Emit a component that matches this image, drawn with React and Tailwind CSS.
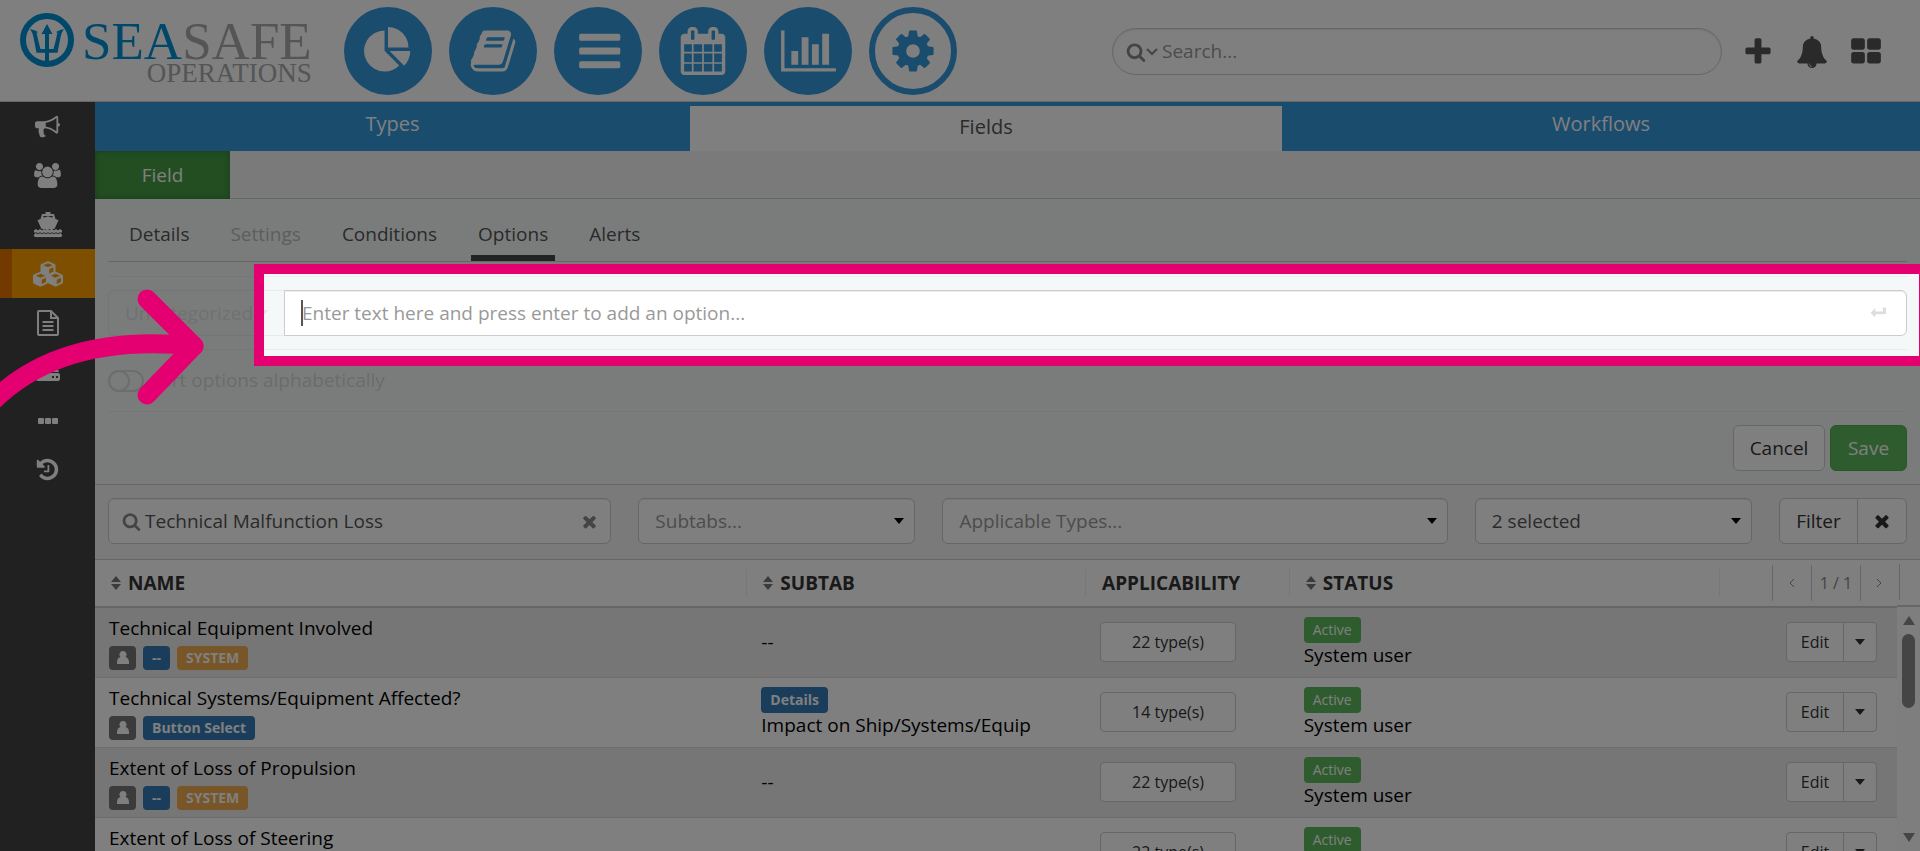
const paths = {
  bullhorn: 'M1664 640q53 0 90.5 37.5t37.5 90.5-37.5 90.5-90.5 37.5v384q0 52-38 90t-90 38q-417-347-812-380-58 19-91 66t-31 100.5 40 92.5q-20 33-23 65.5t6 58 33.5 55 48 50 61.5 50.5q-29 58-111.5 83t-168.5 11.5-132-55.5q-7-23-29.5-87.5t-32-94.5-23-89-15-101 3.5-98.5 22-110.5h-122q-66 0-113-47t-47-113v-192q0-66 47-113t113-47h480q435 0 896-384 52 0 90 38t38 90v384zm-128 604v-954q-394 302-768 343v270q377 42 768 341z',
  users: 'M593 896q-162 5-265 128h-134q-82 0-138-40.5t-56-118.5q0-353 124-353 6 0 43.5 21t97.5 42.5 119 21.5q67 0 133-23-5 37-5 66 0 159 81 290zm1071 637q0 120-73 189.5t-194 69.5h-874q-121 0-194-69.5t-73-189.5q0-53 3.5-103.5t14-109 26.5-108.5 43-97.5 62-81 85.5-53.5 111.5-20q10 0 43 21.5t73 48 107 48 135 21.5 135-21.5 107-48 73-48 43-21.5q61 0 111.5 20t85.5 53.5 62 81 43 97.5 26.5 108.5 14 109 3.5 103.5zm-1024-1277q0 106-75 181t-181 75-181-75-75-181 75-181 181-75 181 75 75 181zm704 384q0 159-112.5 271.5t-271.5 112.5-271.5-112.5-112.5-271.5 112.5-271.5 271.5-112.5 271.5 112.5 112.5 271.5zm576 225q0 78-56 118.5t-138 40.5h-134q-103-123-265-128 81-131 81-290 0-29-5-66 66 23 133 23 59 0 119-21.5t97.5-42.5 43.5-21q124 0 124 353zm-128-609q0 106-75 181t-181 75-181-75-75-181 75-181 181-75 181 75 75 181z',
  search: 'M1216 832q0-185-131.5-316.5t-316.5-131.5-316.5 131.5-131.5 316.5 131.5 316.5 316.5 131.5 316.5-131.5 131.5-316.5zm512 832q0 52-38 90t-90 38q-54 0-90-38l-343-342q-179 124-399 124-143 0-273.5-55.5t-225-150-150-225-55.5-273.5 55.5-273.5 150-225 225-150 273.5-55.5 273.5 55.5 225 150 150 225 55.5 273.5q0 220-124 399l343 343q37 37 37 90z',
  times: 'M1490 1322q0 40-28 68l-136 136q-28 28-68 28t-68-28l-294-294-294 294q-28 28-68 28t-68-28l-136-136q-28-28-28-68t28-68l294-294-294-294q-28-28-28-68t28-68l136-136q28-28 68-28t68 28l294 294 294-294q28-28 68-28t68 28l136 136q28 28 28 68t-28 68l-294 294 294 294q28 28 28 68z',
  plus: 'M1600 736v192q0 40-28 68t-68 28h-416v416q0 40-28 68t-68 28h-192q-40 0-68-28t-28-68v-416h-416q-40 0-68-28t-28-68v-192q0-40 28-68t68-28h416v-416q0-40 28-68t68-28h192q40 0 68 28t28 68v416h416q40 0 68 28t28 68z',
  bell: 'M912 1696q0-16-16-16-59 0-101.5-42.5t-42.5-101.5q0-16-16-16t-16 16q0 73 51.5 124.5t124.5 51.5q16 0 16-16zm816-288q0 52-38 90t-90 38h-448q0 106-75 181t-181 75-181-75-75-181h-448q-52 0-90-38t-38-90q50-42 91-88t85-119.5 74.5-158.5 50-206 19.5-260q0-152 117-282.5t307-158.5q-8-19-8-39 0-40 28-68t68-28 68 28 28 68q0 20-8 39 190 28 307 158.5t117 282.5q0 139 19.5 260t50 206 74.5 158.5 85 119.5 91 88z',
  grid: 'M832 1024v384q0 52-38 90t-90 38h-512q-52 0-90-38t-38-90v-384q0-52 38-90t90-38h512q52 0 90 38t38 90zm0-768v384q0 52-38 90t-90 38h-512q-52 0-90-38t-38-90v-384q0-52 38-90t90-38h512q52 0 90 38t38 90zm896 768v384q0 52-38 90t-90 38h-512q-52 0-90-38t-38-90v-384q0-52 38-90t90-38h512q52 0 90 38t38 90zm0-768v384q0 52-38 90t-90 38h-512q-52 0-90-38t-38-90v-384q0-52 38-90t90-38h512q52 0 90 38t38 90z',
  pie: 'M768 890l546 546q-106 108-247.5 168t-298.5 60q-209 0-385.5-103t-279.5-279.5-103-385.5 103-385.5 279.5-279.5 385.5-103v762zm187 6h773q0 157-60 298.5t-168 247.5zm709-128h-768v-768q209 0 385.5 103t279.5 279.5 103 385.5z',
  book: 'M1703 478q40 57 18 129l-275 906q-19 64-76.5 107.5t-122.5 43.5h-923q-77 0-148.5-53.5t-99.5-131.5q-24-67-2-127 0-4 3-27t4-37q1-8-3-21.5t-3-19.5q2-11 8-21t16.5-23.5 16.5-23.5q23-38 45-91.5t30-91.5q3-10 .5-30t-.5-28q3-11 17-28t17-23q21-36 42-92t25-90q1-9-2.5-32t.5-28q4-13 22-30.5t22-22.5q19-26 42.5-84.5t27.5-96.5q1-8-3-25.5t-2-26.5q2-8 9-18t18-23 17-21q8-12 16.5-30.5t15-35 16-36 19.5-32 26.5-23.5 36-11.5 47.5 5.5l-1 3q38-9 51-9h761q74 0 114 56t18 130l-274 906q-36 119-71.5 153.5t-128.5 34.5h-869q-27 0-38 15-11 16-1 43 24 70 144 70h923q29 0 56-15.5t35-41.5l300-987q7-22 5-57 38 15 59 43zm-1064 2q-4 13 2 22.5t20 9.5h608q13 0 25.5-9.5t16.5-22.5l21-64q4-13-2-22.5t-20-9.5h-608q-13 0-25.5 9.5t-16.5 22.5zm-83 256q-4 13 2 22.5t20 9.5h608q13 0 25.5-9.5t16.5-22.5l21-64q4-13-2-22.5t-20-9.5h-608q-13 0-25.5 9.5t-16.5 22.5z',
  bars: 'M1664 1344v128q0 26-19 45t-45 19h-1408q-26 0-45-19t-19-45v-128q0-26 19-45t45-19h1408q26 0 45 19t19 45zm0-512v128q0 26-19 45t-45 19h-1408q-26 0-45-19t-19-45v-128q0-26 19-45t45-19h1408q26 0 45 19t19 45zm0-512v128q0 26-19 45t-45 19h-1408q-26 0-45-19t-19-45v-128q0-26 19-45t45-19h1408q26 0 45 19t19 45z',
  calendar: 'M192 1664h288v-288h-288v288zm352 0h320v-288h-320v288zm-352-352h288v-320h-288v320zm352 0h320v-320h-320v320zm-352-384h288v-288h-288v288zm736 736h320v-288h-320v288zm-384-736h320v-288h-320v288zm768 736h288v-288h-288v288zm-384-352h320v-320h-320v320zm-352-864v-288q0-13-9.5-22.5t-22.5-9.5h-64q-13 0-22.5 9.5t-9.5 22.5v288q0 13 9.5 22.5t22.5 9.5h64q13 0 22.5-9.5t9.5-22.5zm736 864h288v-320h-288v320zm-384-384h320v-288h-320v288zm384 0h288v-288h-288v288zm32-480v-288q0-13-9.5-22.5t-22.5-9.5h-64q-13 0-22.5 9.5t-9.5 22.5v288q0 13 9.5 22.5t22.5 9.5h64q13 0 22.5-9.5t9.5-22.5zm384-64v1280q0 52-38 90t-90 38h-1408q-52 0-90-38t-38-90v-1280q0-52 38-90t90-38h128v-96q0-66 47-113t113-47h64q66 0 113 47t47 113v96h384v-96q0-66 47-113t113-47h64q66 0 113 47t47 113v96h128q52 0 90 38t38 90z',
  chart: 'M640 896v512h-256v-512h256zm384-512v1024h-256v-1024h256zm1024 1152v128h-2048v-1536h128v1408h1920zm-640-896v768h-256v-768h256zm384-384v1152h-256v-1152h256z',
  cog: 'M1152 896q0-106-75-181t-181-75-181 75-75 181 75 181 181 75 181-75 75-181zm512-109v222q0 12-8 23t-20 13l-185 28q-19 54-39 91 35 50 107 138 10 12 10 25t-9 23q-27 37-99 108t-94 71q-12 0-26-9l-138-108q-44 23-91 38-16 136-29 186-7 28-36 28h-222q-14 0-24.5-8.5t-11.5-21.5l-28-184q-49-16-90-37l-141 107q-10 9-25 9-14 0-25-11-126-114-165-168-7-10-7-23 0-12 8-23 15-21 51-66.5t54-70.5q-27-50-41-99l-183-27q-13-2-21-12.5t-8-23.5v-222q0-12 8-23t19-13l186-28q14-46 39-92-40-57-107-138-10-12-10-24 0-10 9-23 26-36 98.5-107.5t94.5-71.5q13 0 26 10l138 107q44-23 91-38 16-136 29-186 7-28 36-28h222q14 0 24.5 8.5t11.5 21.5l28 184q49 16 90 37l142-107q9-9 24-9 13 0 25 10 129 119 165 170 7 8 7 22 0 12-8 23-15 21-51 66.5t-54 70.5q26 50 41 98l183 28q13 2 21 12.5t8 23.5z',
  history: 'M1664 896q0 156-61 298t-164 245-245 164-298 61q-172 0-327-72.5t-264-204.5q-7-10-6.5-22.5t8.5-20.5l137-138q10-9 25-9 16 2 23 12 73 95 179 147t225 52q104 0 198.5-40.5t163.5-109.5 109.5-163.5 40.5-198.5-40.5-198.5-109.5-163.5-163.5-109.5-198.5-40.5q-98 0-188 35.5t-160 101.5l137 138q31 30 14 69-17 40-59 40h-448q-26 0-45-19t-19-45v-448q0-42 40-59 39-17 69 14l130 129q107-101 244.5-156.5t284.5-55.5q156 0 298 61t245 164 164 245 61 298zm-640-288v448q0 14-9 23t-23 9h-320q-14 0-23-9t-9-23v-64q0-14 9-23t23-9h224v-352q0-14 9-23t23-9h64q14 0 23 9t9 23z',
  enter: 'M1792 320v544q0 66-47 113t-113 47h-1024v288q0 20-14 33t-33 13q-19 0-33-14l-430-430q-14-14-14-34t14-34l430-430q14-14 33-14t33 13 14 33v288h832v-416q0-14 9-23t23-9h288q14 0 23 9t9 23z',
};

function Icon({ name, box = '0 0 1792 1792', className }) {
  return (
    <svg viewBox={box} fill="currentColor" className={className} aria-hidden="true">
      <path d={paths[name]} />
    </svg>
  );
}

function ShipIcon() {
  return (
    <svg viewBox="0 0 28 26" fill="currentColor" className="w-7 h-[26px]" aria-hidden="true">
      <path fillRule="evenodd" d="M11.5 0h5v2h3.500l1.500 5 3 1.200-4 8.800q-1-.5-2 .5-1.200 1-2.300 0t-2.200 0-2.200 0-2.300 0q-1-1-2-.5L3.500 8.200l3-1.200L8 2h3.500zM9.500 4v1.800L14 4.300l4.500 1.500V4z" />
      <path d="M0 20l2-1.500 2 1.500 2-1.500 2 1.500 2-1.500 2 1.500 2-1.500 2 1.500 2-1.500 2 1.500 2-1.500 2 1.500 2-1.500 2 1.500M0 24l2-1.500 2 1.500 2-1.500 2 1.500 2-1.500 2 1.500 2-1.500 2 1.500 2-1.500 2 1.500 2-1.500 2 1.500 2-1.500 2 1.500" fill="none" stroke="currentColor" strokeWidth="2.500" />
    </svg>
  );
}

// One cube: solid body with a hollow top and a hollow right face
const cube = 'M0 4.500Q0 3.300 1 2.900L6.500.4Q7.500 0 8.500.4L14 2.900q1 .4 1 1.600v6q0 1.200-1 1.700l-5.500 2.600q-1 .5-2 0L1 12.200q-1-.5-1-1.700zM7.500 2.200L2.800 4.200l4.700 2 4.700-2zM8.700 8.200v4.200l4.300-2V6.200z';

function CubesIcon() {
  return (
    <svg viewBox="0 0 30 26" fill="currentColor" fillRule="evenodd" className="w-[30px] h-[26px]" aria-hidden="true">
      <path d={cube} transform="translate(7.500 0)" />
      <path d={cube} transform="translate(0 10.500)" />
      <path d={cube} transform="translate(15 10.500)" />
    </svg>
  );
}

function FileIcon() {
  return (
    <svg viewBox="0 0 22 26" fill="none" stroke="currentColor" strokeWidth="2" className="w-[22px] h-[26px]" aria-hidden="true">
      <path d="M1 2q0-1 1-1h12l7 7v16q0 1-1 1H2q-1 0-1-1zM14 1v7h7M5.500 12h11M5.500 16h11M5.500 20h11" />
    </svg>
  );
}

function HddIcon() {
  return (
    <svg viewBox="0 0 24 20" fill="currentColor" className="w-6 h-5" aria-hidden="true">
      <path fillRule="evenodd" d="M5 1h14l4 9H1zM2 11h20q2 0 2 2v4q0 2-2 2H2q-2 0-2-2v-4q0-2 2-2zM16 14v2h2v-2zM20 14v2h2v-2z" />
    </svg>
  );
}

function DotsIcon() {
  return (
    <svg viewBox="0 0 20 6" fill="currentColor" className="w-5 h-[6px]" aria-hidden="true">
      <rect width="6" height="6" rx="1" />
      <rect x="7" width="6" height="6" rx="1" />
      <rect x="14" width="6" height="6" rx="1" />
    </svg>
  );
}

function Trident() {
  return (
    <svg viewBox="0 0 54 54" className="w-[54px] h-[54px] text-[#0090d2]" aria-hidden="true">
      <circle cx="27" cy="27" r="24" fill="none" stroke="currentColor" strokeWidth="6" />
      <path fill="currentColor" d="M27 11l5.500 10h-3.500v15h4.500q2.500-9 4-16.500-1 0-1.500-.5 3-2 8-3-2.500 3-3.500 8.500-1.500 7.500-3 15.200H29V52h-4V39.700h-8.500q-1.500-7.700-3-15.200-1-5.500-3.500-8.500 5 1 8 3-.5.5-1.500.5 1.500 7.500 4 16.500H25V21h-3.500z" />
    </svg>
  );
}

function Caret({ className = '' }) {
  return (
    <svg viewBox="0 0 10 6" fill="currentColor" className={`w-[10px] h-[6px] pointer-events-none ${className}`} aria-hidden="true">
      <path d="M0 0h10L5 6z" />
    </svg>
  );
}

function Chevron({ d }) {
  return (
    <svg viewBox="0 0 6 10" fill="none" stroke="currentColor" className="w-[6px] h-[10px]" aria-hidden="true">
      <path d={d} />
    </svg>
  );
}

function SortIcon() {
  return (
    <svg viewBox="0 0 10 14" fill="currentColor" className="w-[10px] h-[14px] text-[#777]" aria-hidden="true">
      <path d="M5 0l5 6H0zM0 8h10l-5 6z" />
    </svg>
  );
}

const modules = [
  { name: 'pie', label: 'Dashboard' },
  { name: 'book', label: 'Library' },
  { name: 'bars', label: 'Records' },
  { name: 'calendar', label: 'Calendar' },
  { name: 'chart', label: 'Reports' },
];

const sidebar = [
  { label: 'Announcements', icon: <Icon name="bullhorn" className="w-[25px] h-[25px]" /> },
  { label: 'Users', icon: <Icon name="users" box="0 0 1920 1792" className="w-[27px] h-[25px]" /> },
  { label: 'Vessels', icon: <ShipIcon /> },
  { label: 'Modules', icon: <CubesIcon />, active: true },
  { label: 'Documents', icon: <FileIcon /> },
  { label: 'Storage', icon: <HddIcon /> },
  { label: 'More', icon: <DotsIcon /> },
  { label: 'History', icon: <Icon name="history" className="w-[25px] h-[25px]" /> },
];

const fields = [
  { name: 'Technical Equipment Involved', types: 22, system: true },
  { name: 'Technical Systems/Equipment Affected?', types: 14, control: 'Button Select', subtab: 'Impact on Ship/Systems/Equip' },
  { name: 'Extent of Loss of Propulsion', types: 22, system: true },
  { name: 'Extent of Loss of Steering', types: 22, system: true },
];

function Header() {
  return (
    <header className="h-[102px] shrink-0 bg-white border-b border-[#ccc] flex items-start">
      <a href="#" className="flex pt-[13px] pl-5 gap-2 w-[344px] font-['Liberation_Serif',serif]">
        <Trident />
        <span className="flex flex-col items-end pt-[2px]">
          <span className="text-[53px] leading-[52px] text-[#aaa]"><span className="text-[#0090d2]">SEA</span>SAFE</span>
          <span className="text-[27px] leading-[12px] text-[#aaa]">OPERATIONS</span>
        </span>
      </a>
      <nav className="flex gap-[17px] pt-[7px]">
        {modules.map(m => (
          <button key={m.name} aria-label={m.label} className="w-[88px] h-[88px] rounded-full bg-[#3498db] text-white flex items-center justify-center">
            {m.name === 'chart'
              ? <Icon name="chart" box="0 0 2048 1792" className="w-[55px] h-12" />
              : <Icon name={m.name} className="w-12 h-12 overflow-visible" box={m.name === 'bars' ? '-64 0 1792 1792' : '0 0 1792 1792'} />}
          </button>
        ))}
        <button aria-label="Administration" className="w-[88px] h-[88px] rounded-full border-[6px] border-[#3498db] text-[#3498db] flex items-center justify-center">
          <Icon name="cog" className="w-12 h-12" />
        </button>
      </nav>
      <div className="flex items-center ml-auto pr-[38px] pt-7">
        <label className="w-[610px] h-[47px] rounded-full border border-[#ccc] shadow-[inset_0_1px_2px_rgba(0,0,0,0.1)] flex items-center pl-[13px] text-[#888]">
          <Icon name="search" className="w-5 h-5" />
          <svg viewBox="0 0 12 8" className="w-3 h-2 mr-1" fill="none" stroke="currentColor" strokeWidth="2" aria-hidden="true"><path d="M1 1l5 5 5-5" /></svg>
          <input aria-label="Search" placeholder="Search..." className="flex-1 outline-none placeholder:text-[#999]" />
        </label>
        <div className="flex items-center gap-[22px] ml-[20px] text-[#555]">
          <button aria-label="Add"><Icon name="plus" className="w-8 h-8" /></button>
          <button aria-label="Notifications"><Icon name="bell" className="w-8 h-8" /></button>
          <button aria-label="Apps"><Icon name="grid" className="w-8 h-8" /></button>
        </div>
      </div>
    </header>
  );
}

function Sidebar() {
  return (
    <aside className="w-[95px] shrink-0 bg-[#434343] text-white">
      {sidebar.map(item => (
        <button
          key={item.label}
          aria-label={item.label}
          className={item.active
            ? 'w-full h-[49px] flex items-center justify-center bg-[#ff9f00] border-l-[12px] border-[#e67500] pr-3'
            : 'w-full h-[49px] flex items-center justify-center'}
        >
          {item.icon}
        </button>
      ))}
    </aside>
  );
}

function FieldEditor() {
  return (
    <section className="bg-[#f4f8f8] border-b border-[#ccc] h-[286px] shrink-0">
      <nav className="flex gap-[27px] mx-[13px] pl-[14px] pt-3 border-b border-[#ccc] text-[#555]">
        <a href="#" className="h-[50px] pt-[9px] px-[7px]">Details</a>
        <a href="#" className="h-[50px] pt-[9px] px-[7px] text-[#bbb]">Settings</a>
        <a href="#" className="h-[50px] pt-[9px] px-[7px]">Conditions</a>
        <a href="#" className="h-[50px] pt-[9px] px-[7px] border-b-[6px] border-[#444]">Options</a>
        <a href="#" className="h-[50px] pt-[9px] px-[7px]">Alerts</a>
      </nav>
      <div className="mx-[13px] mt-[14px] h-[74px] border-y border-[#ebeded] flex items-center">
        <label className="relative w-44 h-[46px] border border-r-0 border-[#e8ebec] rounded-l-md flex items-center">
          <select aria-label="Category" disabled className="appearance-none w-full h-full pl-4 outline-none text-[#dfe3e4]">
            <option>Uncategorized</option>
          </select>
          <Caret className="absolute right-4 text-[#dfe3e4]" />
        </label>
        <label className="flex-1 h-[46px] bg-white border border-[#ccc] rounded-r-md shadow-[inset_0_1px_1px_rgba(0,0,0,0.075)] flex items-center pl-4 pr-5">
          <span className="w-[2px] -mr-px h-[26px] bg-[#555]" />
          <input aria-label="New option" placeholder="Enter text here and press enter to add an option..." className="flex-1 outline-none placeholder:text-[#999]" />
          <Icon name="enter" className="w-4 h-4 text-[#ddd]" />
        </label>
      </div>
      <label className="mx-[13px] h-[62px] border-b border-[#ebeded] flex items-center gap-[6px] text-[#d5d9da]">
        <input type="checkbox" disabled className="peer sr-only" />
        <span className="w-9 h-[22px] rounded-full border-2 border-[#d8dcdd] flex items-center">
          <span className="w-[22px] h-[22px] -ml-[2px] shrink-0 rounded-full border-2 border-[#d8dcdd]" />
        </span>
        Sort options alphabetically
      </label>
      <div className="flex justify-end gap-[5px] px-[13px] pt-[13px]">
        <button className="h-[46px] w-[92px] rounded-md border border-[#ccc] bg-white text-[#333]">Cancel</button>
        <button className="h-[46px] w-[77px] rounded-md border border-[#4cae4c] bg-[#5cb85c] text-white">Save</button>
      </div>
    </section>
  );
}

function FilterSelect({ label, text, muted }) {
  return (
    <label className="relative h-[46px] min-w-0 flex items-center">
      <select
        aria-label={label}
        className={`appearance-none w-full h-full rounded-md border border-[#ccc] bg-white pl-4 shadow-[inset_0_1px_1px_rgba(0,0,0,0.075)] ${muted ? 'text-[#999]' : 'text-[#555]'}`}
      >
        <option>{text}</option>
      </select>
      <Caret className="absolute right-[11px] text-black" />
    </label>
  );
}

function Filters() {
  return (
    <form className="h-[75px] shrink-0 bg-[#f5f5f5] border-b border-[#ccc] px-[13px] pt-[13px] grid grid-cols-[503fr_277fr_505fr_277fr_auto] gap-[27px]">
      <label className="h-[46px] min-w-0 rounded-md border border-[#ccc] bg-white shadow-[inset_0_1px_1px_rgba(0,0,0,0.075)] flex items-center pl-[13px] pr-[11px] text-[#888]">
        <Icon name="search" className="w-[19px] h-[19px] mr-1" />
        <input aria-label="Name" defaultValue="Technical Malfunction Loss" className="flex-1 min-w-0 outline-none text-[#555]" />
        <Icon name="times" className="w-[19px] h-[19px]" />
      </label>
      <FilterSelect label="Subtabs" text="Subtabs..." muted />
      <FilterSelect label="Applicable types" text="Applicable Types..." muted />
      <FilterSelect label="Status" text="2 selected" />
      <div className="flex h-[46px]">
        <button type="button" className="w-[79px] rounded-l-md border border-[#ccc] bg-white text-[#333]">Filter</button>
        <button type="button" aria-label="Clear filters" className="w-[50px] -ml-px rounded-r-md border border-[#ccc] bg-white text-[#333] flex items-center justify-center">
          <Icon name="times" className="w-5 h-5" />
        </button>
      </div>
    </form>
  );
}

function HeadCell({ children, sort }) {
  return (
    <th scope="col" className="p-0">
      <div className="h-7 flex items-center gap-[7px] pl-4 border-r border-[#eee]">
        {sort && <SortIcon />}
        {children}
      </div>
    </th>
  );
}

function FieldRow({ field }) {
  return (
    <tr className="h-[70px] border-b border-[#ddd] odd:bg-[#ececec] text-black">
      <td className="pl-[14px] py-0">
        <div className="leading-7">{field.name}</div>
        <div className="flex gap-[7px] mt-1 text-sm font-bold text-white">
          <span className="h-6 w-[27px] rounded bg-[#777] flex items-center justify-center">
            <svg viewBox="0 0 12 14" fill="currentColor" className="w-3 h-[14px]" aria-hidden="true"><path d="M6 0a3.500 3.500 0 0 1 2.500 6q3.500.8 3.500 5.500V13H0v-1.500Q0 6.800 3.500 6A3.500 3.500 0 0 1 6 0z" /></svg>
          </span>
          <span className="h-6 px-[9px] rounded bg-[#337ab7] flex items-center">{field.control || '--'}</span>
          {field.system && <span className="h-6 px-[9px] rounded bg-[#f0ad4e] flex items-center">SYSTEM</span>}
        </div>
      </td>
      <td className="pl-[14px] py-0">
        {field.subtab ? (
          <div className="flex flex-col items-start">
            <span className="h-[26px] px-[9px] rounded bg-[#337ab7] text-white text-sm font-bold flex items-center">Details</span>
            <span className="leading-6">{field.subtab}</span>
          </div>
        ) : '--'}
      </td>
      <td className="pl-[14px] py-0">
        <button className="w-[136px] h-10 rounded border border-[#ccc] bg-white text-[#333] text-base">{field.types} type(s)</button>
      </td>
      <td className="pl-[14px] py-0">
        <div className="flex flex-col items-start">
          <span className="h-[26px] px-[9px] rounded bg-[#5cb85c] text-white text-sm flex items-center">Active</span>
          <span className="leading-6">System user</span>
        </div>
      </td>
      <td className="pr-5 py-0">
        <div className="flex justify-end h-10 text-[#333]">
          <button className="w-[58px] rounded-l border border-[#ccc] bg-white text-base">Edit</button>
          <button aria-label="More actions" className="w-[34px] -ml-px rounded-r border border-[#ccc] bg-white flex items-center justify-center"><Caret /></button>
        </div>
      </td>
    </tr>
  );
}

function FieldTable() {
  return (
    <section className="flex flex-1 min-h-0 overflow-hidden">
      <div className="flex-1 min-w-0">
        <table className="w-full table-fixed border-collapse text-left">
          <colgroup>
            <col className="w-[36.2%]" />
            <col className="w-[18.8%]" />
            <col className="w-[11.3%]" />
            <col className="w-[23.9%]" />
            <col />
          </colgroup>
          <thead>
            <tr className="h-[47px] border-b-2 border-[#ccc] text-[#333]">
              <HeadCell sort>NAME</HeadCell>
              <HeadCell sort>SUBTAB</HeadCell>
              <HeadCell>APPLICABILITY</HeadCell>
              <HeadCell sort>STATUS</HeadCell>
              <th className="p-0 font-normal">
                <div className="flex justify-end h-9 text-[#888] text-base">
                  <button aria-label="Previous page" className="w-[39px] border-l border-[#ccc] flex items-center justify-center"><Chevron d="M5 1L1 5l4 4" /></button>
                  <span className="w-[50px] border-x border-[#ccc] flex items-center justify-center">1 / 1</span>
                  <button aria-label="Next page" className="w-9 flex items-center justify-center"><Chevron d="M1 1l4 4-4 4" /></button>
                </div>
              </th>
            </tr>
          </thead>
          <tbody>
            {fields.map(f => <FieldRow key={f.name} field={f} />)}
          </tbody>
        </table>
      </div>
      <div className="w-[23px] flex flex-col">
        <div className="h-[47px] shrink-0 border-b-2 border-[#ccc] pl-[2px] pt-1">
          <div className="h-9 w-px bg-[#ccc]" />
        </div>
        {/* scrollbar */}
        <div className="flex-1 bg-[#fcfcfc] flex flex-col items-center pt-[9px] pb-[9px] text-[#8b8b8b]">
          <svg viewBox="0 0 12 9" fill="currentColor" className="w-3 h-[9px]" aria-hidden="true"><path d="M6 0l6 9H0z" /></svg>
          <span className="w-[13px] h-[74px] mt-[9px] rounded-full bg-[#8b8b8b]" />
          <svg viewBox="0 0 12 9" fill="currentColor" className="w-3 h-[9px] mt-auto" aria-hidden="true"><path d="M0 0h12L6 9z" /></svg>
        </div>
      </div>
    </section>
  );
}

// Dims the page and points at the option input
function Highlight() {
  return (
    <>
      <div className="absolute top-[264px] left-[254px] -right-[9px] h-[102px] border-[10px] border-[#e50072] shadow-[0_0_0_2000px_rgba(0,0,0,0.5)] pointer-events-none" />
      <svg viewBox="0 0 210 140" className="absolute top-[280px] left-0 w-[210px] h-[140px] pointer-events-none" fill="none" stroke="#e50072" strokeWidth="19" strokeLinecap="round" strokeLinejoin="round" aria-hidden="true">
        <path d="M-10 124Q60 52 194 66" />
        <path d="M147 19l47 47-47 49" />
      </svg>
    </>
  );
}

export default function App() {
  return (
    <div className="relative h-screen overflow-hidden flex flex-col bg-white text-[19px] font-['Open_Sans',sans-serif]">
      <Header />
      <div className="flex flex-1 min-h-0">
        <Sidebar />
        <main className="flex-1 min-w-0 flex flex-col">
          <nav className="h-[49px] shrink-0 bg-[#3498db] text-white text-xl flex">
            <a href="#" className="flex-[595] flex items-center justify-center pb-[5px]">Types</a>
            <a href="#" className="flex-[592] flex items-center justify-center mt-1 pb-1 bg-white text-[#555]">Fields</a>
            <a href="#" className="flex-[638] flex items-center justify-center pb-[5px]">Workflows</a>
          </nav>
          <div className="h-12 shrink-0 bg-[#f5f5f5] border-b border-[#ccc]">
            <button className="h-12 w-[135px] bg-[#449d44] text-white shadow-[inset_0_0_6px_rgba(0,0,0,0.25)]">Field</button>
          </div>
          <FieldEditor />
          <Filters />
          <FieldTable />
        </main>
      </div>
      <Highlight />
    </div>
  );
}
